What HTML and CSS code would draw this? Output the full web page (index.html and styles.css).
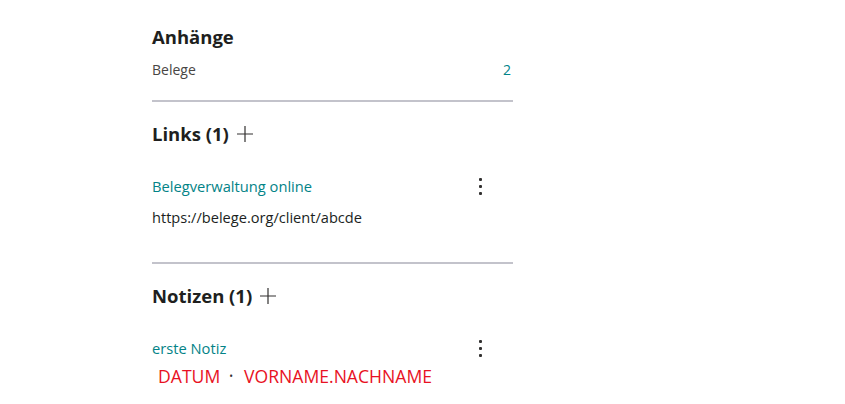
FILE: index.html
```html
<!DOCTYPE html>
<html lang="de">
<head>
<meta charset="utf-8">
<link rel="stylesheet" href="styles.css">
</head>
<body>
<div class="panel">
  <section class="section first">
    <h2 class="title">Anhänge</h2>
    <div class="row">
      <span class="label">Belege</span>
      <span class="count">2</span>
    </div>
  </section>
  <hr class="divider">
  <section class="section">
    <h2 class="title">Links (1) <span class="plus"><svg width="18" height="18" viewBox="0 0 18 18"><path d="M9 1v16M1 9h16" stroke="#323130" stroke-width="1.2" fill="none"/></svg></span></h2>
    <div class="item">
      <div class="item-head">
        <span class="link">Belegverwaltung online</span>
        <span class="kebab"><i></i><i></i><i></i></span>
      </div>
      <div class="url">https://belege.org/client/abcde</div>
    </div>
  </section>
  <hr class="divider second">
  <section class="section">
    <h2 class="title">Notizen (1) <span class="plus"><svg width="18" height="18" viewBox="0 0 18 18"><path d="M9 1v16M1 9h16" stroke="#323130" stroke-width="1.2" fill="none"/></svg></span></h2>
    <div class="item">
      <div class="item-head">
        <span class="link">erste Notiz</span>
        <span class="kebab"><i></i><i></i><i></i></span>
      </div>
      <div class="meta"><span class="red">DATUM</span><span class="dot">•</span><span class="red">VORNAME.NACHNAME</span></div>
    </div>
  </section>
</div>
</body>
</html>
```

FILE: styles.css
```css
html, body {
  margin: 0;
  padding: 0;
  background: #ffffff;
}
body {
  font-family: "Open Sans", "Noto Sans", sans-serif;
  color: #201f1e;
}
.panel {
  margin-left: 152px;
  width: 361px;
  padding-top: 24px;
}
.title {
  margin: 0;
  font-size: 18.5px;
  font-weight: 700;
  line-height: 26px;
  display: flex;
  align-items: center;
  gap: 7px;
  color: #201f1e;
}
.plus {
  display: inline-flex;
}
.row {
  display: flex;
  justify-content: space-between;
  margin-top: 10px;
  font-size: 14px;
  line-height: 20px;
}
.label {
  color: #484644;
}
.count {
  color: #008489;
  font-size: 14px;
  padding-right: 2px;
}
.divider {
  border: 0;
  height: 2px;
  background: #c3c3cb;
  margin: 20px 0 0 0;
}
.divider.second {
  margin-top: 35px;
}
.section {
  padding-top: 19px;
}
.section.first {
  padding-top: 0;
}
.item {
  margin-top: 29px;
}
.item-head {
  display: flex;
  justify-content: space-between;
  align-items: center;
}
.link {
  color: #038387;
  font-size: 14.7px;
  line-height: 20px;
}
.kebab {
  display: flex;
  flex-direction: column;
  gap: 4px;
  width: 3px;
  margin-right: 31px;
}
.kebab i {
  display: block;
  width: 3px;
  height: 3px;
  background: #323130;
  border-radius: 1px;
}
.url {
  font-size: 14.6px;
  line-height: 20px;
  margin-top: 11px;
  color: #201f1e;
}
.meta {
  display: flex;
  align-items: center;
  margin-top: 7px;
  padding-left: 6px;
  font-size: 17.6px;
  line-height: 22px;
}
.red {
  color: #e81123;
}
.dot {
  color: #323130;
  font-size: 10px;
  margin: 0 11px 0 9px;
}
```
